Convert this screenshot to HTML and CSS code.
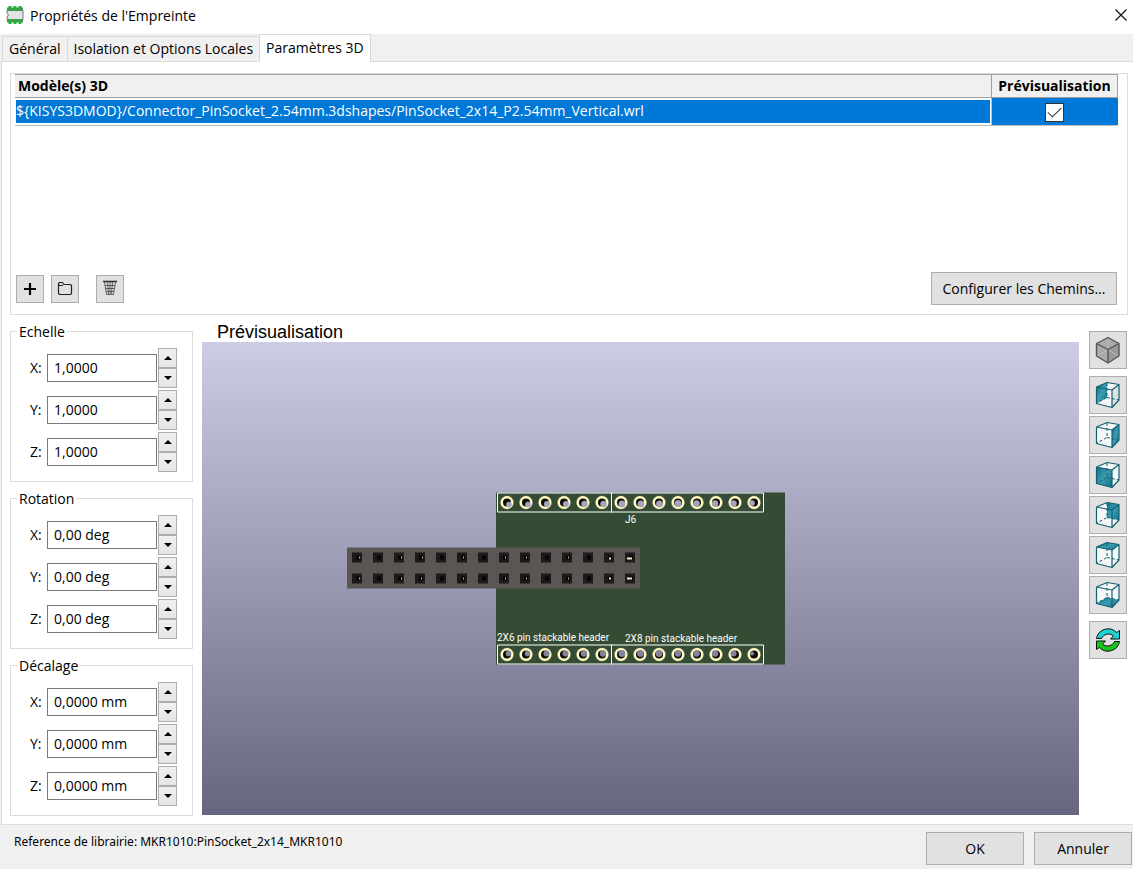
FILE: index.html
```html
<!DOCTYPE html>
<html lang="fr">
<head>
<meta charset="utf-8">
<title>Propriétés de l'Empreinte</title>
<link rel="stylesheet" href="styles.css">
</head>
<body>
<svg class="defs" aria-hidden="true">
  <defs>
    <linearGradient id="teal" x1="0" y1="0" x2="1" y2="1"><stop offset="0" stop-color="#077389"/><stop offset=".5" stop-color="#3c9bb0"/><stop offset="1" stop-color="#0b7288"/></linearGradient>
    <g id="wire" fill="none" stroke="#15616f" stroke-width="1.2" stroke-linejoin="round">
      <path d="M7.500 11 23 14V31.500L7.500 27.500ZM7.500 11 18 6.500 30 8.500 23 14M30 8.500V24L23 31.500"/>
      <path d="M18 7V21.500L8 27M18 21.500 30 24" stroke-dasharray="3 2" stroke-width="1"/>
    </g>
    <g id="ring"><circle r="7" fill="#6d6a72"/><circle r="6.400" fill="#ffffb9"/><circle r="4" fill="#0c0c0c"/></g>
    <g id="rings"><use href="#ring" x="0"/><use href="#ring" x="19"/><use href="#ring" x="38"/><use href="#ring" x="57"/><use href="#ring" x="76"/><use href="#ring" x="95"/><use href="#ring" x="114"/><use href="#ring" x="133"/><use href="#ring" x="152"/><use href="#ring" x="171"/><use href="#ring" x="190"/><use href="#ring" x="209"/><use href="#ring" x="228"/><use href="#ring" x="247"/></g>
    <g id="pin"><rect width="10" height="10" fill="#1b1b1b"/><rect x="4" y="3" width="4" height="4" fill="#050505"/></g>
    <g id="pins"><use href="#pin" x="0"/><use href="#pin" x="21"/><use href="#pin" x="42"/><use href="#pin" x="63"/><use href="#pin" x="84"/><use href="#pin" x="105"/><use href="#pin" x="126"/><use href="#pin" x="147"/><use href="#pin" x="168"/><use href="#pin" x="189"/><use href="#pin" x="210"/><use href="#pin" x="231"/><use href="#pin" x="252"/><use href="#pin" x="273"/></g>
  </defs>
</svg>

<header class="titlebar">
  <svg class="app-icon" viewBox="0 0 18 18"><path d="M1 4.500H17V13.500H1V11L2.500 9 1 7Z" fill="#e3e3e3" stroke="#777"/><path d="M1 1.500H17V4H1ZM1 14H17V16.500H1Z" fill="#777"/><path d="M2.500 0H5.500V5H2.500ZM7.500 0H10.500V5H7.500ZM12.500 0H15.500V5H12.500ZM2.500 13H5.500V18H2.500ZM7.500 13H10.500V18H7.500ZM12.500 13H15.500V18H12.500Z" fill="#0fbd2b"/></svg>
  <h1 class="title">Propriétés de l'Empreinte</h1>
  <button class="close" aria-label="Fermer"><svg viewBox="0 0 12 12"><path d="M.500 .500 11.500 11.500M11.500 .500 .500 11.500" fill="none" stroke="#111" stroke-width="1.200"/></svg></button>
</header>

<nav class="tabs" role="tablist">
  <button class="tab" role="tab">Général</button>
  <button class="tab" role="tab">Isolation et Options Locales</button>
  <button class="tab active" role="tab" aria-selected="true">Paramètres 3D</button>
</nav>

<main class="page">
  <section class="models">
    <table class="grid">
      <thead><tr><th class="name">Modèle(s) 3D</th><th class="show">Prévisualisation</th></tr></thead>
      <tbody><tr><td class="file"><div class="selected">${KISYS3DMOD}/Connector_PinSocket_2.54mm.3dshapes/PinSocket_2x14_P2.54mm_Vertical.wrl</div></td><td class="tick"><input type="checkbox" class="check" aria-label="Prévisualisation" checked></td></tr></tbody>
    </table>
    <div class="actions">
      <button class="small" aria-label="Ajouter"><svg viewBox="1 1 26 26"><path d="M14 8V20M8 14H20" stroke="#000" stroke-width="2.200"/></svg></button>
      <button class="small" aria-label="Parcourir"><svg viewBox="1 1 26 26"><path d="M7.500 18.500V8.500L8.500 7.500H11.500L13 9.500H19.500L20.500 10.500V18.500L19.500 19.500H8.500ZM8 10.500H12" fill="none" stroke="#222" stroke-width="1.200"/></svg></button>
      <button class="small delete" aria-label="Supprimer"><svg viewBox="1 1 26 26"><path d="M7 6.500H21" stroke="#333" stroke-width="1.600"/><path d="M8.500 7 10.500 19.500H17.500L19.500 7M11.500 7 12.500 19M14 7V19M16.500 7 15.500 19M9 10.500H19M9.500 13.500H18.500M10 16.500H18" fill="none" stroke="#444" stroke-width=".8"/></svg></button>
      <button class="button paths">Configurer les Chemins...</button>
    </div>
  </section>

  <div class="lower">
    <div class="settings">
      <fieldset class="group"><legend>Echelle</legend>
        <div class="axis"><label for="sx">X:</label><input id="sx" value="1,0000"><span class="spin"><button aria-label="Augmenter"></button><button aria-label="Diminuer"></button></span></div>
        <div class="axis"><label for="sy">Y:</label><input id="sy" value="1,0000"><span class="spin"><button aria-label="Augmenter"></button><button aria-label="Diminuer"></button></span></div>
        <div class="axis"><label for="sz">Z:</label><input id="sz" value="1,0000"><span class="spin"><button aria-label="Augmenter"></button><button aria-label="Diminuer"></button></span></div>
      </fieldset>
      <fieldset class="group"><legend>Rotation</legend>
        <div class="axis"><label for="rx">X:</label><input id="rx" value="0,00 deg"><span class="spin"><button aria-label="Augmenter"></button><button aria-label="Diminuer"></button></span></div>
        <div class="axis"><label for="ry">Y:</label><input id="ry" value="0,00 deg"><span class="spin"><button aria-label="Augmenter"></button><button aria-label="Diminuer"></button></span></div>
        <div class="axis"><label for="rz">Z:</label><input id="rz" value="0,00 deg"><span class="spin"><button aria-label="Augmenter"></button><button aria-label="Diminuer"></button></span></div>
      </fieldset>
      <fieldset class="group"><legend>Décalage</legend>
        <div class="axis"><label for="dx">X:</label><input id="dx" value="0,0000 mm"><span class="spin"><button aria-label="Augmenter"></button><button aria-label="Diminuer"></button></span></div>
        <div class="axis"><label for="dy">Y:</label><input id="dy" value="0,0000 mm"><span class="spin"><button aria-label="Augmenter"></button><button aria-label="Diminuer"></button></span></div>
        <div class="axis"><label for="dz">Z:</label><input id="dz" value="0,0000 mm"><span class="spin"><button aria-label="Augmenter"></button><button aria-label="Diminuer"></button></span></div>
      </fieldset>
    </div>

    <section class="preview">
      <h2 class="preview-title">Prévisualisation</h2>
      <div class="scene">
        <svg class="board" viewBox="0 0 877 472">
          <rect x="294" y="150" width="289" height="172" fill="#334c33"/>
          <path d="M295.500 150.500H561.500V169.500H295.500ZM409.500 150V170M295.500 302.500H561.500V321.500H295.500ZM409.500 302V322" fill="none" stroke="#fff"/>
          <use href="#rings" x="305" y="160"/>
          <use href="#rings" x="305" y="312"/>
          <g fill="#a6a5c0" stroke="#a6a5c0" stroke-width=".6">
            <circle cx="307" cy="162" r="2.600"/><circle cx="326" cy="162" r="2.600"/><circle cx="345" cy="161.500" r="2.800"/><circle cx="364" cy="161.500" r="2.800"/><circle cx="382.500" cy="161.500" r="3"/><circle cx="401.500" cy="161.500" r="3"/><circle cx="420" cy="161.500" r="3.200"/><circle cx="439" cy="161.500" r="3.200"/><circle cx="457.500" cy="161.500" r="3.200"/><circle cx="476" cy="161" r="3.200"/><circle cx="494.500" cy="161" r="3"/><circle cx="513" cy="161" r="3"/><circle cx="531.500" cy="161" r="3"/><circle cx="550" cy="160.500" r="2.600"/>
          </g>
          <g fill="#85849e" stroke="#85849e" stroke-width=".6">
            <circle cx="306.500" cy="311" r="2.600"/><circle cx="325.500" cy="311" r="2.600"/><circle cx="344.500" cy="311" r="2.800"/><circle cx="363.500" cy="311" r="2.800"/><circle cx="382" cy="311" r="3"/><circle cx="401" cy="311" r="3"/><circle cx="420" cy="311" r="3.200"/><circle cx="438.500" cy="311" r="3.200"/><circle cx="457" cy="311" r="3.200"/><circle cx="476" cy="311" r="3"/><circle cx="494.500" cy="311" r="3"/><circle cx="513" cy="311" r="3"/><circle cx="531.500" cy="311" r="2.800"/><circle cx="550" cy="311" r="1.800"/>
          </g>
          <rect x="145" y="205" width="293" height="41" fill="#5b5553"/>
          <use href="#pins" x="150" y="210"/>
          <use href="#pins" x="150" y="231"/>
          <path d="M157 215h1M199 215h1M220 215h1M261 215h1M303 215h1M324 215h1M366 215h1M157 236h1M199 236h1M219 236h1M261 236h1M303 236h1M324 236h1M366 236h1" stroke="#c7ad78" stroke-width="2"/>
          <path d="M407 216h2M425 216h5M407 236h2M425 236h5" stroke="#f4e7b4" stroke-width="2"/>
          <path d="M202.500 213v5M202.500 234v5" stroke="#6b6663"/>
          <g class="silk"><text x="423" y="180">J6</text><text x="295" y="298">2X6 pin stackable header</text><text x="423" y="299">2X8 pin stackable header</text></g>
        </svg>
      </div>
    </section>

    <div class="views">
      <button class="view spaced" aria-label="Projection"><svg viewBox="1 1 36 36"><path d="M19 6.500 30 12.500V25L19 32 7.500 25V12.500Z" fill="#aaa"/><path d="M19 18.500 30 12.500V25L19 32Z" fill="#999"/><path d="M8 25 19 19 30 25M19 7V18" stroke="#bbb" fill="none"/><path d="M19 6.500 30 12.500V25L19 32 7.500 25V12.500ZM7.500 12.500 19 18.500 30 12.500M19 18.500V32" fill="none" stroke="#555" stroke-width="1.400" stroke-linejoin="round"/></svg></button>
      <button class="view" aria-label="Vue gauche"><svg viewBox="1 1 36 36"><path d="M18 7 30 8.500 23 14V31.500L7.500 27.500 18 21.500Z" fill="#f4f8f9"/><path d="M7.500 11 18 6.500V21.500L7.500 27.500Z" fill="url(#teal)"/><use href="#wire"/></svg></button>
      <button class="view" aria-label="Vue droite"><svg viewBox="1 1 36 36"><path d="M7.500 11 18 6.500 30 8.500 23 14V31.500L7.500 27.500Z" fill="#f4f8f9"/><path d="M23 14 30 8.500V24L23 31.500Z" fill="url(#teal)"/><use href="#wire"/></svg></button>
      <button class="view" aria-label="Vue avant"><svg viewBox="1 1 36 36"><path d="M7.500 11 18 6.500 30 8.500V24L23 31.500V14Z" fill="#f4f8f9"/><path d="M7.500 11 23 14V31.500L7.500 27.500Z" fill="url(#teal)"/><use href="#wire"/></svg></button>
      <button class="view" aria-label="Vue arrière"><svg viewBox="1 1 36 36"><path d="M7.500 11 18 6.500 30 8.500V24L23 31.500 7.500 27.500Z" fill="#f4f8f9"/><path d="M18 6.500 30 8.500V24L18 21.500Z" fill="url(#teal)"/><use href="#wire"/></svg></button>
      <button class="view" aria-label="Vue dessus"><svg viewBox="1 1 36 36"><path d="M7.500 11 23 14 30 8.500V24L23 31.500 7.500 27.500Z" fill="#f4f8f9"/><path d="M7.500 11 18 6.500 30 8.500 23 14Z" fill="url(#teal)"/><use href="#wire"/></svg></button>
      <button class="view spaced" aria-label="Vue dessous"><svg viewBox="1 1 36 36"><path d="M7.500 11 18 6.500 30 8.500V24L18 21.500 7.500 27.500Z" fill="#f4f8f9"/><path d="M7.500 27.500 18 21.500 30 24 23 31.500Z" fill="url(#teal)"/><use href="#wire"/></svg></button>
      <button class="view" aria-label="Actualiser"><svg viewBox="1 1 36 36"><path d="M7.500 17.500A11.700 11.700 0 0 1 27.500 11.500L30.500 9.500V18H21.500L24.500 15A7.500 7.500 0 0 0 12.500 17.500Z" fill="#1fd3d3" stroke="#111"/><path d="M30.500 20.500A11.700 11.700 0 0 1 10.500 26.500L7.500 28.500V20H16.500L13.500 23A7.500 7.500 0 0 0 25.500 20.500Z" fill="#19c51c" stroke="#111"/></svg></button>
    </div>
  </div>
</main>

<footer class="footer">
  <p class="reference">Reference de librairie: MKR1010:PinSocket_2x14_MKR1010</p>
  <button class="button choice">OK</button>
  <button class="button choice">Annuler</button>
</footer>
</body>
</html>
```
FILE: styles.css
```css
* { box-sizing: border-box; }

body {
  margin: 0;
  min-height: 100vh;
  display: flex;
  flex-direction: column;
  background: #f0f0f0;
  color: #000;
  font: 14px/20px "Open Sans", "Noto Sans", sans-serif;
}

button, input { font: inherit; color: inherit; margin: 0; padding: 0; border-radius: 0; }
button svg { display: block; width: 100%; height: 100%; }
.defs { position: absolute; width: 0; height: 0; }

.titlebar { display: flex; align-items: center; height: 34px; padding: 0 6px; background: #fff; }
.app-icon { width: 18px; height: 18px; margin-bottom: 4px; }
.title { flex: 1; margin: 0 0 2px 6px; font-size: 14px; font-weight: 400; }
.close { width: 12px; height: 12px; margin-bottom: 4px; border: 0; background: none; }

.tabs { display: flex; align-items: flex-end; height: 27px; padding-left: 2px; }
.tab { height: 25px; padding: 0 6px; border: 1px solid #d9d9d9; border-bottom: 0; border-right: 0; background: #f0f0f0; white-space: nowrap; }
.tab.active { height: 28px; padding-bottom: 2px; border-right: 1px solid #d9d9d9; background: #fff; position: relative; z-index: 1; margin-bottom: -1px; }

.page { flex: 1; display: flex; flex-direction: column; gap: 7px; margin-left: 1px; padding: 11px 5px 7px 8px; background: #fff; border: 1px solid #dcdcdc; border-right: 0; }

.models { display: flex; flex-direction: column; justify-content: space-between; min-height: 242px; padding: 0 9px 9px 4px; border: 1px solid #dcdcdc; }
.grid { width: 100%; border-collapse: collapse; table-layout: fixed; }
.grid th { height: 23px; padding: 0 3px; background: #f0f0f0; border: 1px solid #a0a0a0; border-left: 0; text-align: left; line-height: 20px; }
.grid .show { width: 126px; padding: 0; border-left: 1px solid #a0a0a0; text-align: center; }
.grid td { height: 27px; padding: 2px 1px; border-bottom: 1px solid #c0c0c0; }
.grid .tick { padding: 0; background: #0078d7; border-left: 1px solid #c0c0c0; text-align: center; line-height: 19px; }
.selected { height: 23px; line-height: 21px; background: #0078d7; color: #fff; overflow: hidden; white-space: nowrap; }
.check { appearance: none; display: inline-grid; place-items: center; width: 19px; height: 19px; border: 1px solid #333; background: #fff; vertical-align: middle; }
.check:checked::after { content: ""; width: 12px; height: 6px; margin-bottom: 3px; border: solid #333; border-width: 0 0 1px 1px; rotate: -45deg; }

.actions { display: flex; align-items: center; gap: 7px; padding: 0 1px; }
.small { width: 28px; height: 28px; border: 1px solid #adadad; background: #e1e1e1; }
.delete { margin-left: 10px; }
.button { height: 33px; border: 1px solid #adadad; background: #e1e1e1; }
.paths { margin-left: auto; width: 186px; }

.lower { flex: 1; display: flex; padding-right: 1px; }
.settings { display: flex; flex-direction: column; gap: 7px; width: 183px; }
.group { min-width: 0; margin: 0; padding: 7px 15px 9px 19px; border: 1px solid #dcdcdc; display: flex; flex-direction: column; gap: 2px; }
.group legend { height: 19px; margin-left: -13px; padding: 0 2px; line-height: 19px; }
.axis { display: flex; align-items: center; height: 40px; }
.axis label { width: 17px; }
.axis input { flex: 1; min-width: 0; height: 28px; padding: 0 6px 2px; border: 1px solid #7a7a7a; background: #fff; }
.spin { display: flex; flex-direction: column; width: 19px; height: 40px; margin-left: 1px; }
.spin button { flex: 1; display: grid; place-items: center; border: 1px solid #adadad; background: linear-gradient(#f0f0f0, #e5e5e5); }
.spin button::after { content: ""; border: 4px solid transparent; border-top: 0; border-bottom-color: #000; }
.spin button:last-child::after { border-top: 4px solid #000; border-bottom: 0; }

.preview { flex: 1; min-width: 0; display: flex; flex-direction: column; margin: 0 10px 0 9px; padding-bottom: 2px; }
.preview-title { margin: 0; padding-left: 15px; font: 18px/20px "Liberation Sans", Arial, sans-serif; }
.scene { flex: 1; display: flex; background: linear-gradient(#cccce5, #666680); }
.board { width: 100%; }
.silk { fill: #fff; font: 10px Roboto, sans-serif; }

.views { display: flex; flex-direction: column; gap: 2px; padding-top: 9px; }
.view { width: 38px; height: 38px; border: 1px solid #adadad; background: #e1e1e1; }
.spaced { margin-bottom: 5px; }

.footer { display: flex; align-items: flex-start; gap: 10px; min-height: 44px; padding: 7px 1px 4px 14px; }
.reference { flex: 1; margin: 0; font: 12px/20px "Noto Sans", "Open Sans", sans-serif; }
.choice { width: 98px; }
```
